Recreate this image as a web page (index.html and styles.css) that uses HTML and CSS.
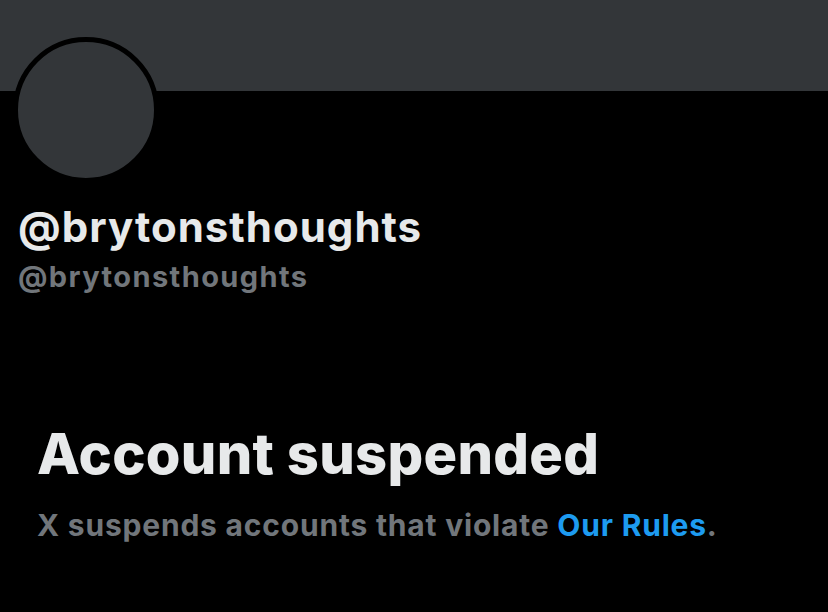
FILE: index.html
```html
<!DOCTYPE html>
<html>
<head>
<meta charset="utf-8">
<link rel="stylesheet" href="styles.css">
</head>
<body>
<div class="page">
  <div class="banner"></div>
  <div class="profile">
    <div class="avatar-row">
      <div class="avatar"></div>
    </div>
    <div class="name">@brytonsthoughts</div>
    <div class="handle">@brytonsthoughts</div>
  </div>
  <div class="notice">
    <div class="title">Account suspended</div>
    <div class="sub">X suspends accounts that violate <span class="link">Our Rules</span>.</div>
  </div>
</div>
</body>
</html>
```
FILE: styles.css
```css
html, body {
  margin: 0;
  padding: 0;
  background: #000;
}
body {
  width: 828px;
  height: 612px;
  overflow: hidden;
  font-family: Inter, "Liberation Sans", sans-serif;
}
.page {
  display: flex;
  flex-direction: column;
}
.banner {
  height: 91px;
  background: #333639;
}
.profile {
  padding: 0 0 0 18px;
  display: flex;
  flex-direction: column;
}
.avatar-row {
  margin-top: -54px;
  margin-left: -5px;
  height: 145px;
}
.avatar {
  width: 136px;
  height: 136px;
  border-radius: 50%;
  background: #333639;
  border: 5px solid #000;
}
.name {
  margin-top: 21px;
  font-size: 42px;
  font-weight: 700;
  color: #e7e9ea;
  line-height: 48px;
  letter-spacing: 1px;
}
.handle {
  font-size: 29px;
  font-weight: 700;
  color: #71767b;
  line-height: 36px;
  margin-top: 8px;
  letter-spacing: 1.4px;
}
.notice {
  padding: 0 0 0 37px;
  margin-top: 123px;
}
.title {
  font-size: 56px;
  font-weight: 800;
  color: #e7e9ea;
  line-height: 72px;
  letter-spacing: 0.3px;
}
.sub {
  margin-top: 17px;
  font-size: 30px;
  font-weight: 700;
  color: #71767b;
  line-height: 36px;
  letter-spacing: 0.8px;
}
.link {
  color: #1d9bf0;
}
```
